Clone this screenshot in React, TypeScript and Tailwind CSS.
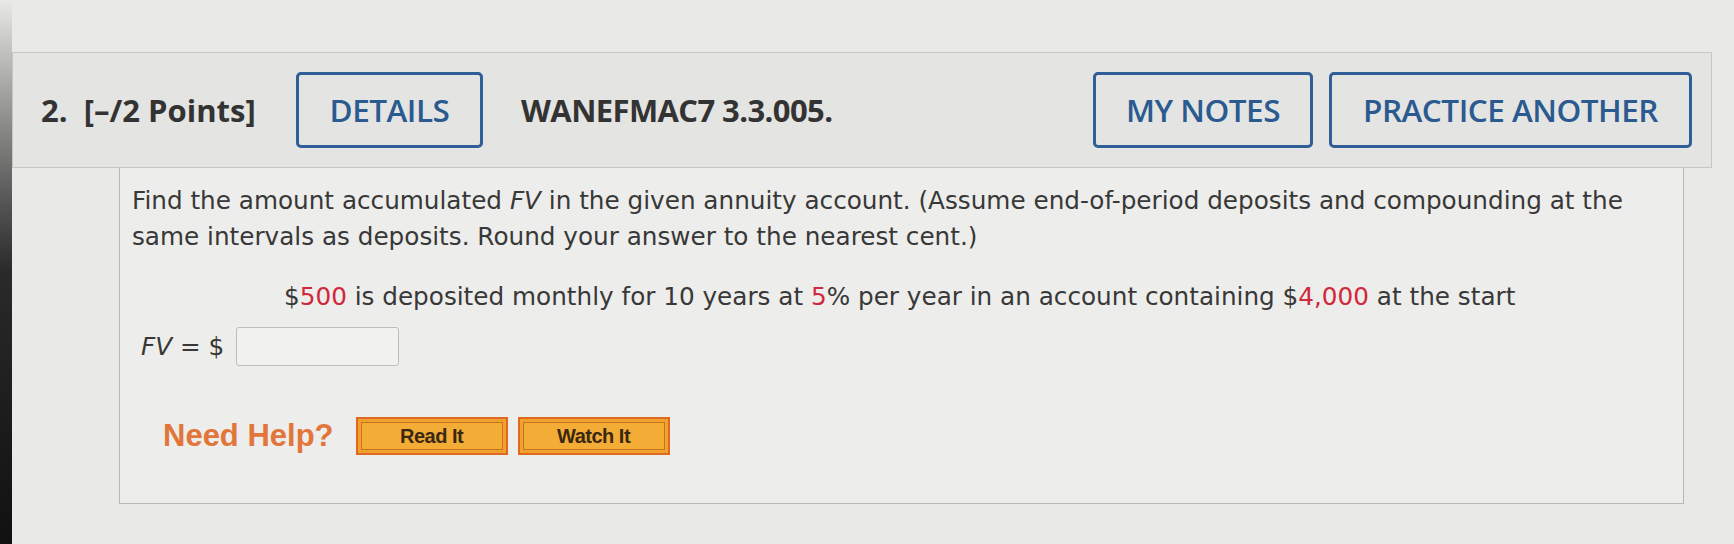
import React from 'react';

function OutlineButton({ label, width }: { label: string; width: string }) {
  return (
    <div
      className={`${width} h-[76px] flex items-center justify-center rounded-[5px] border-[3px] border-[#2f5f96] text-[#2a5a90] text-[31.5px] font-semibold tracking-[-0.5px]`}
    >
      {label}
    </div>
  );
}

function HelpButton({ label }: { label: string }) {
  return (
    <div className="w-[152px] h-[38px] border-2 border-[#e0681f] bg-[#f1a12e] p-[3px]">
      <div className="h-full flex items-center justify-center border border-[#c9731f] bg-[#f3ac35] text-[#3a2812] text-[20px] font-bold tracking-[-0.5px] font-['Liberation_Sans',Arial,sans-serif]">
        {label}
      </div>
    </div>
  );
}

export default function App() {
  return (
    <div className="w-[1734px] h-[544px] flex bg-[#e9e9e7] overflow-hidden">
      {/* dark screen edge */}
      <div className="w-[12px] h-full bg-gradient-to-b from-[#e9e9e7] via-[#2a2a2a] to-[#111111]" />

      <div className="flex-1 pt-[52px] pr-[22px] font-['Open_Sans',sans-serif]">
        {/* Question header */}
        <div className="h-[116px] flex items-center pl-[28px] pr-[19px] border border-[#c6c6c4] bg-[#e4e4e2] text-[#333333]">
          <span className="w-[214px] whitespace-nowrap text-[31px] font-bold tracking-[0px]">
            2.&nbsp; [–/2 Points]
          </span>
          <div className="ml-[41px]">
            <OutlineButton label="DETAILS" width="w-[187px]" />
          </div>
          <span className="ml-[38px] text-[31px] font-bold tracking-[-0.6px]">WANEFMAC7 3.3.005.</span>
          <div className="ml-auto flex gap-[16px]">
            <OutlineButton label="MY NOTES" width="w-[220px]" />
            <OutlineButton label="PRACTICE ANOTHER" width="w-[363px]" />
          </div>
        </div>

        {/* Question body */}
        <div className="ml-[107px] w-[1565px] h-[336px] border border-t-0 border-[#b9b9b7] bg-[#ededeb] pl-[12px] pt-[15px] font-['DejaVu_Sans',Verdana,sans-serif] text-[#383838] text-[24.7px]">
          <p className="leading-[36px]">
            Find the amount accumulated <i>FV</i> in the given annuity account. (Assume end-of-period deposits and compounding at the
            <br />
            same intervals as deposits. Round your answer to the nearest cent.)
          </p>

          <p className="mt-[24px] ml-[152px] leading-[36px]">
            $<span className="text-[#d0283c]">500</span> is deposited monthly for 10 years at{' '}
            <span className="text-[#d0283c]">5</span>% per year in an account containing $
            <span className="text-[#d0283c]">4,000</span> at the start
          </p>

          <div className="mt-[12px] ml-[9px] flex items-center gap-[12px] h-[39px]">
            <span>
              <i>FV</i> = $
            </span>
            <div className="w-[163px] h-[39px] border border-[#bdbdbb] rounded-[3px] bg-[#f1f1ef]" />
          </div>

          <div className="mt-[51px] ml-[31px] flex items-center h-[38px]">
            <span className="text-[#e2763a] text-[31px] font-bold tracking-[0px] font-['Liberation_Sans',Arial,sans-serif]">
              Need Help?
            </span>
            <div className="ml-[22px] flex gap-[10px]">
              <HelpButton label="Read It" />
              <HelpButton label="Watch It" />
            </div>
          </div>
        </div>
      </div>
    </div>
  );
}
